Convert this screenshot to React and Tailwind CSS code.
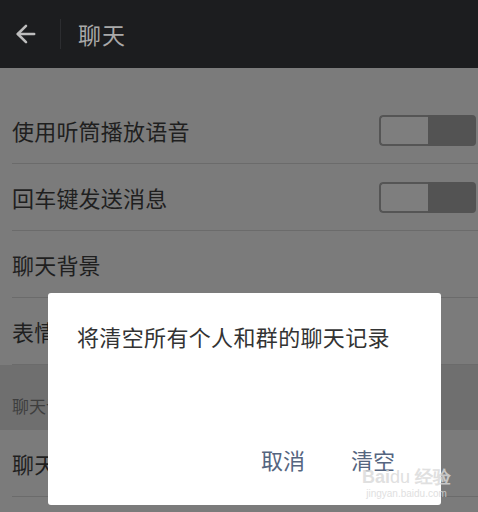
import { ArrowLeft } from "lucide-react";

function Toggle() {
  return (
    <div className="flex h-[31px] w-[97px] overflow-hidden rounded-[4px]">
      <div className="h-full w-[49px] rounded-l-[4px] border-2 border-r-0 border-[#555555] bg-[#7e7e7e]" />
      <div className="h-full flex-1 bg-[#535353]" />
    </div>
  );
}

function Row({ label, toggle }) {
  return (
    <div className="ml-3 flex h-[67px] items-center justify-between border-b border-[#6b6b6b] pr-[2px]">
      <span className="text-[22px] tracking-[0.2px] text-[#1f1f1f]">{label}</span>
      {toggle && <Toggle />}
    </div>
  );
}

export default function App() {
  return (
    <div
      className="relative h-[512px] w-[478px] overflow-hidden bg-[#7b7b7b]"
      style={{ fontFamily: '"Noto Sans CJK SC", "Noto Sans", sans-serif' }}
    >
      <div className="flex h-[68px] items-center bg-[#1c1d1f]">
        <div className="flex w-[52px] items-center justify-center">
          <ArrowLeft className="h-[28px] w-[28px] text-[#bdbdbd]" strokeWidth={2.2} />
        </div>
        <div className="ml-[8px] h-[30px] w-px bg-[#2c2d30]" />
        <span className="ml-[17px] text-[23px] tracking-[1px] text-[#a9a9a9]">聊天</span>
      </div>

      <div className="h-[29px]" />
      <Row label="使用听筒播放语音" toggle />
      <Row label="回车键发送消息" toggle />
      <Row label="聊天背景" />
      <Row label="表情管理" />

      <div className="flex h-[65px] items-end bg-[#6f6f6f] pb-[12px] pl-3">
        <span className="text-[17px] text-[#3e3e3e]">聊天记录</span>
      </div>
      <Row label="聊天记录迁移" />

      <div className="absolute left-[48px] top-[293px] flex h-[212px] w-[393px] flex-col rounded-[3px] bg-white">
        <p className="pl-[29px] pt-[27px] text-[22px] tracking-[0.35px] text-[#333333]">
          将清空所有个人和群的聊天记录
        </p>
        <div className="mt-auto flex justify-end gap-[46px] pb-[29px] pr-[46px]">
          <span className="text-[22px] text-[#55657f]">取消</span>
          <span className="text-[22px] text-[#55657f]">清空</span>
        </div>
      </div>

      <div className="absolute left-[362px] top-[468px] flex flex-col items-center leading-none text-[#d9d9d9] opacity-80">
        <span className="text-[18px] font-bold" style={{ fontFamily: '"Liberation Sans", sans-serif' }}>
          Bai<span className="font-normal">du</span> 经验
        </span>
        <span className="mt-[3px] text-[10px]" style={{ fontFamily: '"Liberation Sans", sans-serif' }}>
          jingyan.baidu.com
        </span>
      </div>
    </div>
  );
}
